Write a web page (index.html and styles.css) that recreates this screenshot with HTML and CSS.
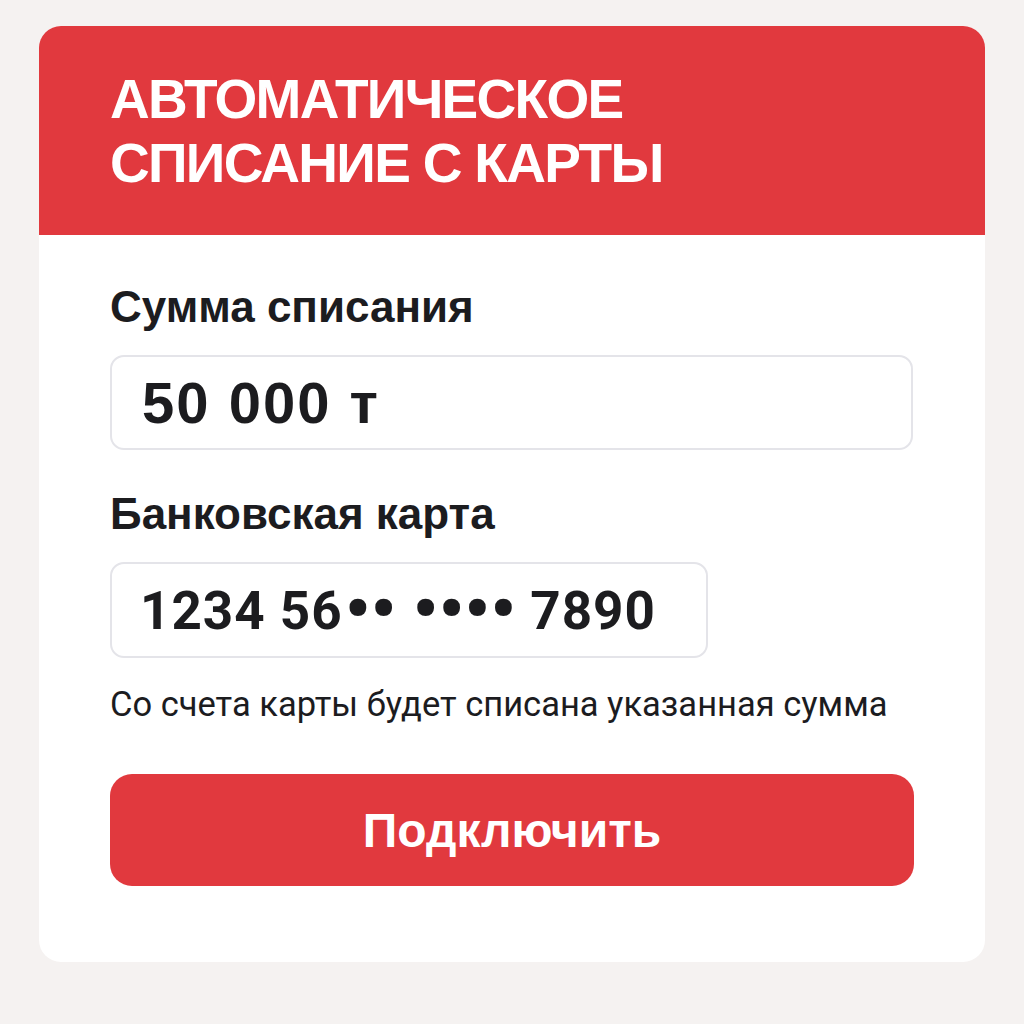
FILE: index.html
```html
<!DOCTYPE html>
<html lang="ru">

<head>
    <meta charset="UTF-8">
    <meta name="viewport" content="width=device-width, initial-scale=1.0">
    <link rel="stylesheet" href="styles.css">
</head>

<body>
    <div class="card">
        <div class="card-header">
            <h1 class="title">АВТОМАТИЧЕСКОЕ<br>СПИСАНИЕ С КАРТЫ</h1>
        </div>
        <div class="card-body">
            <div class="label">Сумма списания</div>
            <div class="field field-amount"><span>50 000 т</span></div>

            <div class="label label-card">Банковская карта</div>
            <div class="field field-card"><span>1234 56<span class="mask">••</span> <span class="mask">••••</span> 7890</span></div>

            <p class="hint">Со счета карты будет списана указанная сумма</p>

            <button class="btn">Подключить</button>
        </div>
    </div>
</body>

</html>
```

FILE: styles.css
```css
body {
    margin: 0;
    background: #f5f2f1;
    font-family: "Liberation Sans", Arial, sans-serif;
    color: #1c1c1f;
}

.card {
    width: 946px;
    margin: 26px 0 0 39px;
    background: #ffffff;
    border-radius: 22px;
    overflow: hidden;
}

.card-header {
    height: 209px;
    background: #e1393e;
    padding: 0 71px;
    display: flex;
    align-items: center;
}

.title {
    margin: 0;
    color: #ffffff;
    font-size: 55px;
    line-height: 64px;
    font-weight: bold;
    letter-spacing: -1.7px;
}

.card-body {
    padding: 46px 71px 76px;
}

.label {
    font-size: 44px;
    font-weight: bold;
    line-height: 52px;
}

.label-card {
    margin-top: 38px;
}

.field {
    box-sizing: border-box;
    margin-top: 22px;
    border: 2px solid #e4e4e9;
    border-radius: 14px;
    display: flex;
    align-items: center;
    font-weight: bold;
    line-height: 60px;
    white-space: pre;
}

.field-amount {
    width: 803px;
    height: 95px;
    padding-left: 30px;
    font-size: 58px;
    letter-spacing: 2px;
}

.field-card {
    width: 598px;
    height: 96px;
    padding-left: 28px;
    font-family: Roboto, "Liberation Sans", sans-serif;
    font-size: 53px;
    letter-spacing: 1px;
}

.mask {
    font-size: 72px;
    line-height: 1;
    letter-spacing: 0;
    vertical-align: -5px;
    margin-left: 2px;
}

.hint {
    margin: 22px 0 0;
    font-family: Roboto, "Liberation Sans", sans-serif;
    font-size: 34.5px;
    line-height: 48px;
}

.btn {
    display: block;
    width: 804px;
    height: 112px;
    margin-top: 46px;
    border: none;
    border-radius: 22px;
    background: #e1393e;
    color: #ffffff;
    font-family: "Liberation Sans", Arial, sans-serif;
    font-size: 48px;
    font-weight: bold;
}
```
